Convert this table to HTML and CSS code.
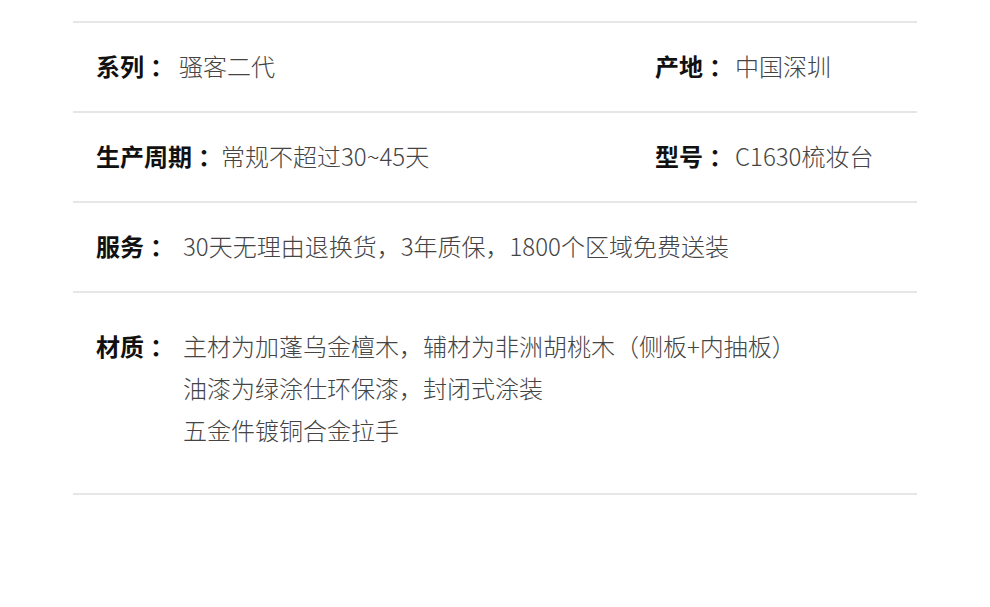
FILE: index.html
```html
<!DOCTYPE html>
<html lang="zh-CN">
<head>
    <meta charset="UTF-8">
    <title>产品参数</title>
    <link rel="stylesheet" href="styles.css">
</head>
<body>
    <div class="specs">
        <div class="row">
            <p class="item"><span class="label">系列<span class="colon">：</span></span><span class="value gap-m">骚客二代</span></p>
            <p class="item"><span class="label">产地<span class="colon">：</span></span><span class="value gap-s">中国深圳</span></p>
        </div>
        <div class="row">
            <p class="item"><span class="label">生产周期<span class="colon">：</span></span><span class="value gap-xs">常规不超过30~45天</span></p>
            <p class="item"><span class="label">型号<span class="colon">：</span></span><span class="value gap-s">C1630梳妆台</span></p>
        </div>
        <div class="row">
            <p class="item item-wide"><span class="label">服务<span class="colon">：</span></span><span class="value gap-l">30天无理由退换货，3年质保，1800个区域免费送装</span></p>
        </div>
        <div class="row row-tall">
            <p class="item item-wide"><span class="label">材质<span class="colon">：</span></span><span class="value gap-l">主材为加蓬乌金檀木，辅材为非洲胡桃木（侧板+内抽板）<br>油漆为绿涂仕环保漆，封闭式涂装<br>五金件镀铜合金拉手</span></p>
        </div>
    </div>
</body>
</html>
```

FILE: styles.css
```css
body {
    margin: 0;
    background: #fff;
    font-family: "Noto Sans CJK SC", "Noto Sans", sans-serif;
}
.specs {
    width: 844px;
    margin: 0 auto;
    padding-top: 21px;
}
.row {
    display: grid;
    grid-template-columns: 559px 1fr;
    padding: 22px 23px 24px;
    border-top: 2px solid #e6e6e6;
}
.row-tall {
    padding-top: 32px;
    padding-bottom: 42px;
    border-bottom: 2px solid #e6e6e6;
}
.item {
    display: flex;
    align-items: flex-start;
    margin: 0;
    font-size: 24px;
    line-height: 42px;
}
.item-wide {
    grid-column: 1 / -1;
}
.label {
    flex: none;
    font-weight: 700;
    color: #111;
}
.colon {
    display: inline-block;
    box-sizing: border-box;
    width: 24px;
    padding-left: 6px;
}
.value {
    font-weight: 300;
    color: #444;
}
.gap-xs { margin-left: 5px; }
.gap-s { margin-left: 8px; }
.gap-m { margin-left: 11px; }
.gap-l { margin-left: 15px; }
```
